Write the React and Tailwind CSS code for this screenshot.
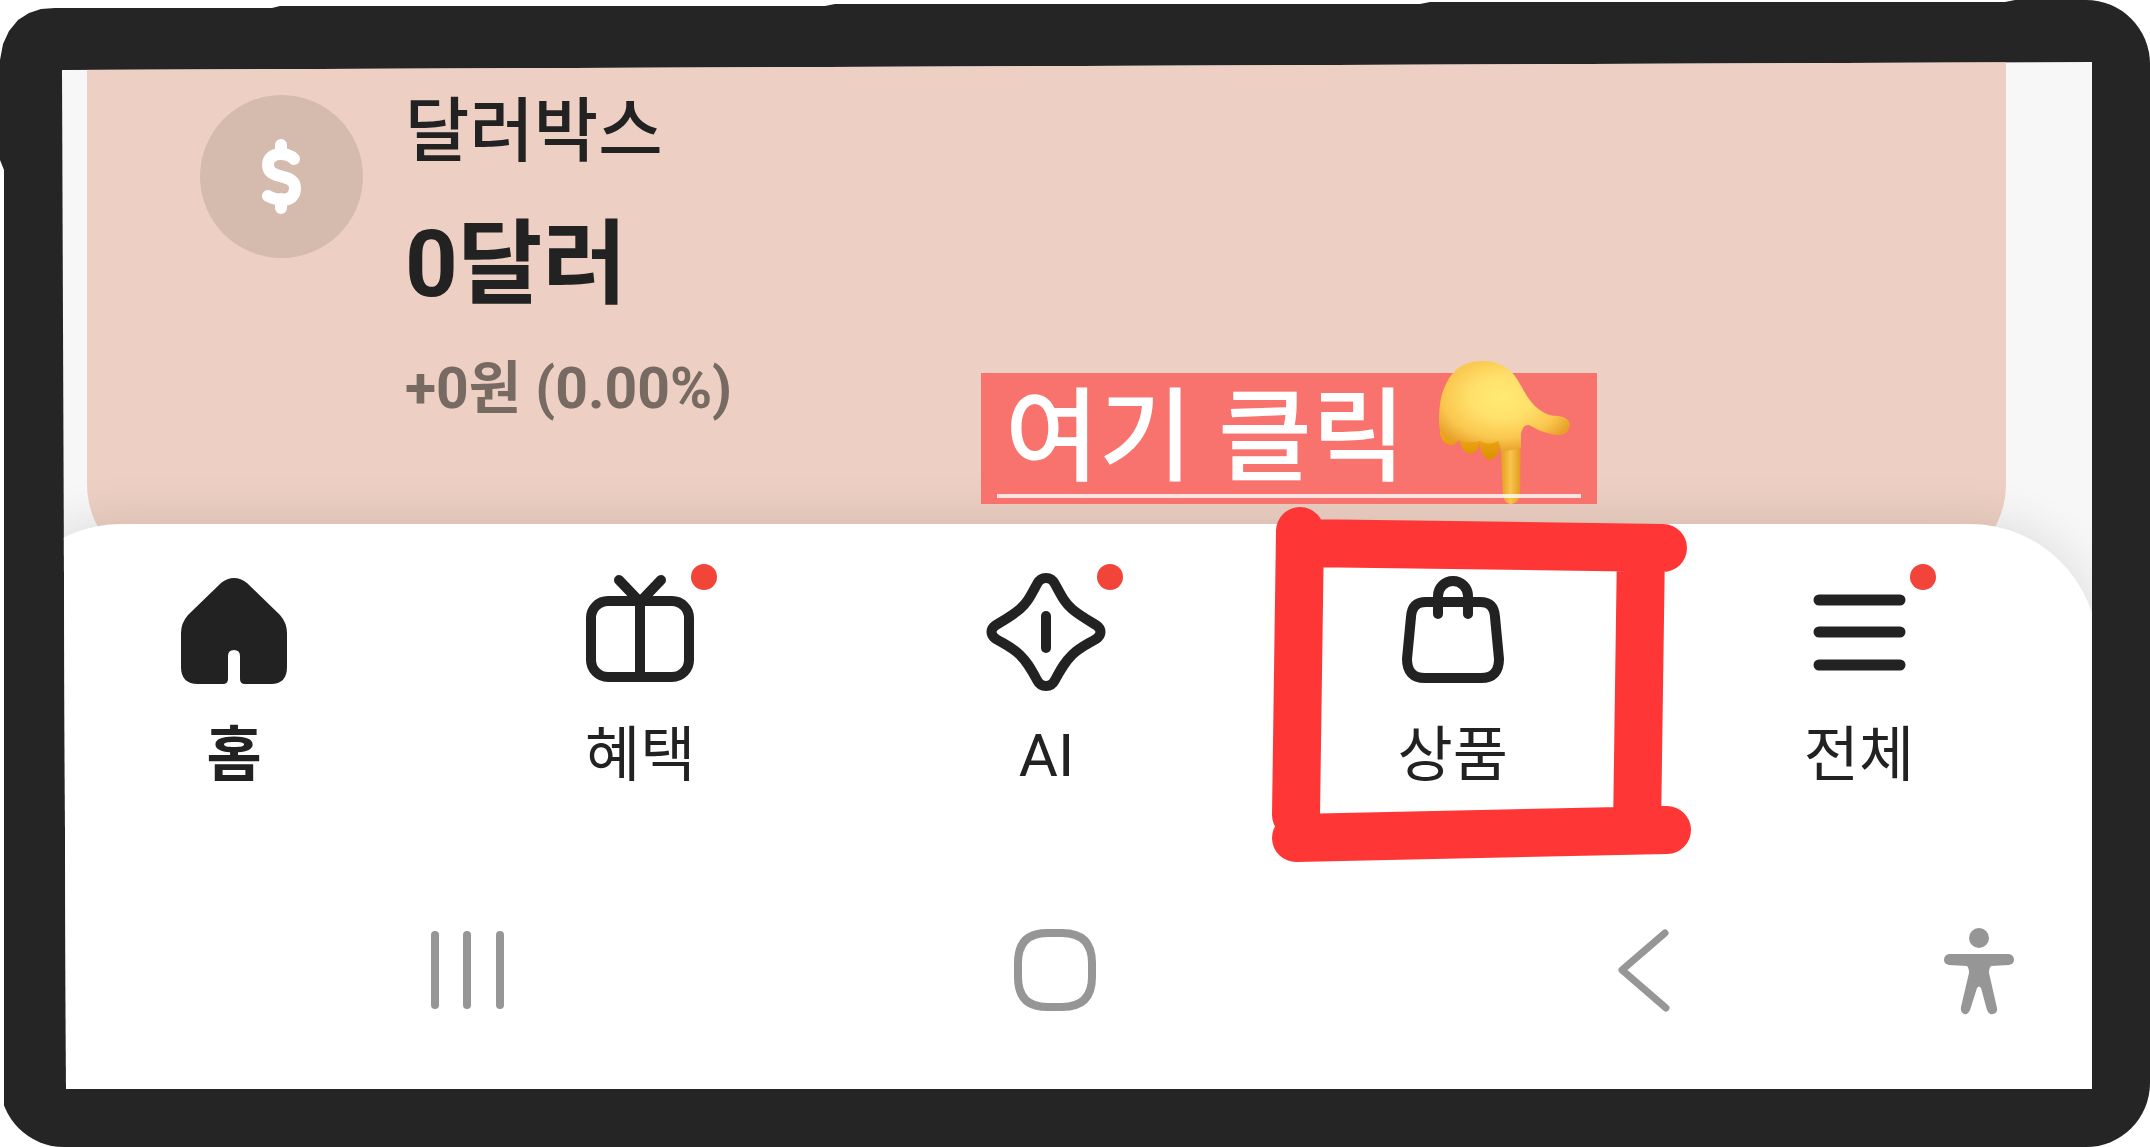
function HomeIcon() {
  return (
    <svg viewBox="0 0 120 120" className="size-[120px]" fill="#222222">
      <path d="M47 11 Q60 1 73 11 L106 43 Q113 51 113 61 V95 Q113 112 97 112 H71 Q66 112 66 107 V84 Q66 78 60 78 Q54 78 54 84 V107 Q54 112 49 112 H24 Q7 112 7 95 V61 Q7 51 14 43 Z" />
    </svg>
  );
}

function GiftIcon() {
  return (
    <svg viewBox="0 0 120 120" className="size-[120px]" fill="none" stroke="#222222" strokeWidth="10" strokeLinecap="round">
      <rect x="11" y="29" width="98" height="76" rx="17" />
      <path d="M60 29V105M39 8L60 30L81 8" />
    </svg>
  );
}

function AiIcon() {
  return (
    <svg viewBox="0 0 120 120" className="size-[120px]" fill="none" stroke="#222222" strokeWidth="10" strokeLinecap="round" strokeLinejoin="round">
      <path d="M51 12C55 4 65 4 69 12C76 25 79 31 86 37C93 43 100 47 110 53C116 57 116 63 110 67C100 73 93 76 86 83C79 90 76 95 69 108C65 116 55 116 51 108C44 95 41 90 34 83C27 76 20 73 10 67C4 63 4 57 10 53C20 47 27 43 34 37C41 31 44 25 51 12Z" />
      <path d="M60 44V76" />
    </svg>
  );
}

function BagIcon() {
  return (
    <svg viewBox="0 0 120 120" className="size-[120px]" fill="none" stroke="#222222" strokeWidth="10" strokeLinecap="round">
      <path d="M33 30H87Q101 30 102 45L106 87Q106 106 88 106H32Q14 106 14 87L18 45Q19 30 33 30Z" />
      <path d="M45 42V24a15 15 0 0 1 30 0V42" />
    </svg>
  );
}

function MenuIcon() {
  return (
    <svg viewBox="0 0 120 120" className="size-[120px]" fill="none" stroke="#222222" strokeWidth="11" strokeLinecap="round">
      <path d="M20 28H101M20 60H101M20 93H101" />
    </svg>
  );
}

function DollarIcon() {
  return (
    <svg viewBox="0 0 163 163" className="size-[163px]" fill="none" stroke="#ffffff" strokeWidth="12" strokeLinecap="round">
      <path d="M94 64C88 57 68 56 68 70C68 86 95 77 95 93C95 107 80 107 68 101" />
      <path d="M81 50V58M81 104V113" />
    </svg>
  );
}

function PointDown() {
  return (
    <svg viewBox="0 0 132 144" className="w-[132px] h-[144px]">
      <defs>
        <radialGradient id="palm" cx="0.48" cy="0.4" r="0.6">
          <stop offset="0" stopColor="#ffea74" />
          <stop offset="0.4" stopColor="#ffe06a" />
          <stop offset="0.75" stopColor="#fac74f" />
          <stop offset="1" stopColor="#e8a02a" />
        </radialGradient>
        <linearGradient id="finger" x1="0" x2="1">
          <stop offset="0" stopColor="#e39a1c" />
          <stop offset="0.5" stopColor="#f9c54c" />
          <stop offset="1" stopColor="#e09a22" />
        </linearGradient>
        <linearGradient id="curled" x1="0" y1="0" x2="0" y2="1">
          <stop offset="0" stopColor="#f5b21c" />
          <stop offset="1" stopColor="#dc8f00" />
        </linearGradient>
      </defs>
      <path d="M2 66V74Q5 86 15 85L22 80V70ZM21 74Q22 93 33 94Q42 92 42 76ZM41 76Q42 99 52 100Q63 98 62 76Z" fill="url(#curled)" />
      <path d="M62 76L65 136Q67 144 73 144Q81 143 82 135L83 72Z" fill="url(#finger)" />
      <path d="M1 63C1 44 3 34 8 24C15 8 28 1 45 1C61 1 72 8 79 19C87 32 92 45 105 52C112 57 119 55 125 57Q132 60 132 66Q130 75 120 75C108 74 98 69 91 65Q85 64 83 74V88L63 92Q62 84 60 81Q51 86 42 81Q31 84 21 80Q12 84 6 77Q1 72 1 63Z" fill="url(#palm)" />
    </svg>
  );
}

const tabs = [
  { label: "홈", Icon: HomeIcon, active: true },
  { label: "혜택", Icon: GiftIcon, dot: true },
  { label: "AI", Icon: AiIcon, dot: true },
  { label: "상품", Icon: BagIcon, marked: true },
  { label: "전체", Icon: MenuIcon, dot: true },
];

function MarkerBox() {
  return (
    <svg
      viewBox="0 0 420 360"
      className="absolute -top-[66px] left-1/2 -ml-[181px] w-[420px] h-[360px] max-w-none pointer-events-none"
      fill="none"
      stroke="#ff3636"
      strokeWidth="48"
      strokeLinecap="round"
    >
      <path d="M28 25L24 309M28 37L391 42M369 42L365 324M24 332L395 324" />
    </svg>
  );
}

function Tab({ tab }) {
  const { label, Icon, active, dot, marked } = tab;
  return (
    <button className="relative flex flex-col items-center gap-7">
      <span className="relative block">
        <Icon />
        {dot && <span className="absolute -top-2 left-[111px] size-[26px] rounded-full bg-[#f24438]" />}
      </span>
      <span className={active ? "text-[60px] leading-[72px] font-bold" : "text-[60px] leading-[72px]"}>{label}</span>
      {marked && <MarkerBox />}
    </button>
  );
}

function DollarBox() {
  return (
    <section className="flow-root pl-[25px] pr-[86px]">
      <div className="h-[512px] -mb-[50px] rounded-b-[90px] bg-[#edd0c3] pl-[113px] pt-[33px] flex items-start gap-[42px]">
        <div className="rounded-full bg-[#d4bbae]">
          <DollarIcon />
        </div>
        <div>
          <h2 className="text-[70px] leading-[74px] font-medium">달러박스</h2>
          <p className="mt-10 text-[92px] leading-[112px] font-bold">0달러</p>
          <p className="mt-8 text-[57px] leading-[72px] font-bold text-[#766a62]">+0원 (0.00%)</p>
        </div>
      </div>
    </section>
  );
}

/* handwritten note pointing at the 상품 tab */
function ClickNote() {
  return (
    <div className="absolute bottom-5 left-[919px] z-20 w-[616px] h-[131px] bg-[#f8736d] px-4">
      <p className="pl-2 text-[102px] leading-[131px] font-medium text-white whitespace-nowrap">여기 클릭</p>
      <div className="absolute left-[457px] -top-[13px]">
        <PointDown />
      </div>
      <div className="absolute left-4 right-4 bottom-[6px] h-1 bg-white/80" />
    </div>
  );
}

function SystemBar() {
  return (
    <div className="grid grid-cols-[1fr_1fr_1fr_88px] pl-[110px] pr-[69px] pb-[74px] justify-items-center">
      <button aria-label="최근 앱">
        <svg viewBox="0 0 88 88" className="size-[88px]" fill="none" stroke="#969696" strokeWidth="8" strokeLinecap="round">
          <path d="M13 8V78M45 8V78M78 8V78" />
        </svg>
      </button>
      <button aria-label="홈 화면">
        <svg viewBox="0 0 88 88" className="size-[88px]" fill="none" stroke="#969696" strokeWidth="8">
          <path d="M38 6H53Q83 6 83 36V50Q83 80 53 80H38Q9 80 9 50V36Q9 6 38 6Z" />
        </svg>
      </button>
      <button aria-label="뒤로">
        <svg viewBox="0 0 88 88" className="size-[88px]" fill="none" stroke="#969696" strokeWidth="7" strokeLinecap="round" strokeLinejoin="round">
          <path d="M68 6L25 43L69 81" />
        </svg>
      </button>
      <button aria-label="접근성">
        <svg viewBox="0 0 88 88" className="size-[88px]" fill="#969696">
          <circle cx="44" cy="11" r="10" />
          <path d="M14 27H74Q79 28 79 33Q79 37 74 38L56 39Q54 41 54 46L62 81Q63 86 58 87Q54 88 52 83L46 61Q44 58 42 61L35 83Q33 88 29 87Q25 85 26 80L34 46Q34 41 32 39L14 38Q9 37 9 33Q9 28 14 27Z" />
        </svg>
      </button>
    </div>
  );
}

export default function App() {
  return (
    <div className="bg-white text-[#222222] font-[Roboto,'Noto_Sans_CJK_KR',sans-serif]">
      <main className="bg-[#252525] pt-[62px] pr-[58px] pb-[58px] pl-[62px] rounded-tr-[64px] rounded-b-[64px] [clip-path:polygon(0_60px,3px_44px,9px_31px,18px_20px,29px_13px,41px_9px,55px_8px,272px_8px,280px_6px,825px_6px,835px_4px,1420px_4px,1430px_2px,2005px_2px,2015px_0,100%_0,100%_100%,4px_100%,4px_170px,0_160px)]">
        <div className="overflow-hidden bg-[#f7f7f7] [clip-path:polygon(0_8px,100%_0,100%_100%,4px_100%)]">
          <div className="relative">
            <DollarBox />
            <ClickNote />
          </div>
          <div className="relative z-10 -ml-[69px] -mr-[6px] rounded-t-[128px] bg-white shadow-[0_-6px_48px_rgba(0,0,0,0.1)]">
            <nav className="grid grid-cols-5 pl-[38px] pr-9 pt-12 pb-[135px]">
              {tabs.map((tab) => (
                <Tab key={tab.label} tab={tab} />
              ))}
            </nav>
            <div className="ml-[69px] mr-[6px]">
              <SystemBar />
            </div>
          </div>
        </div>
      </main>
    </div>
  );
}
